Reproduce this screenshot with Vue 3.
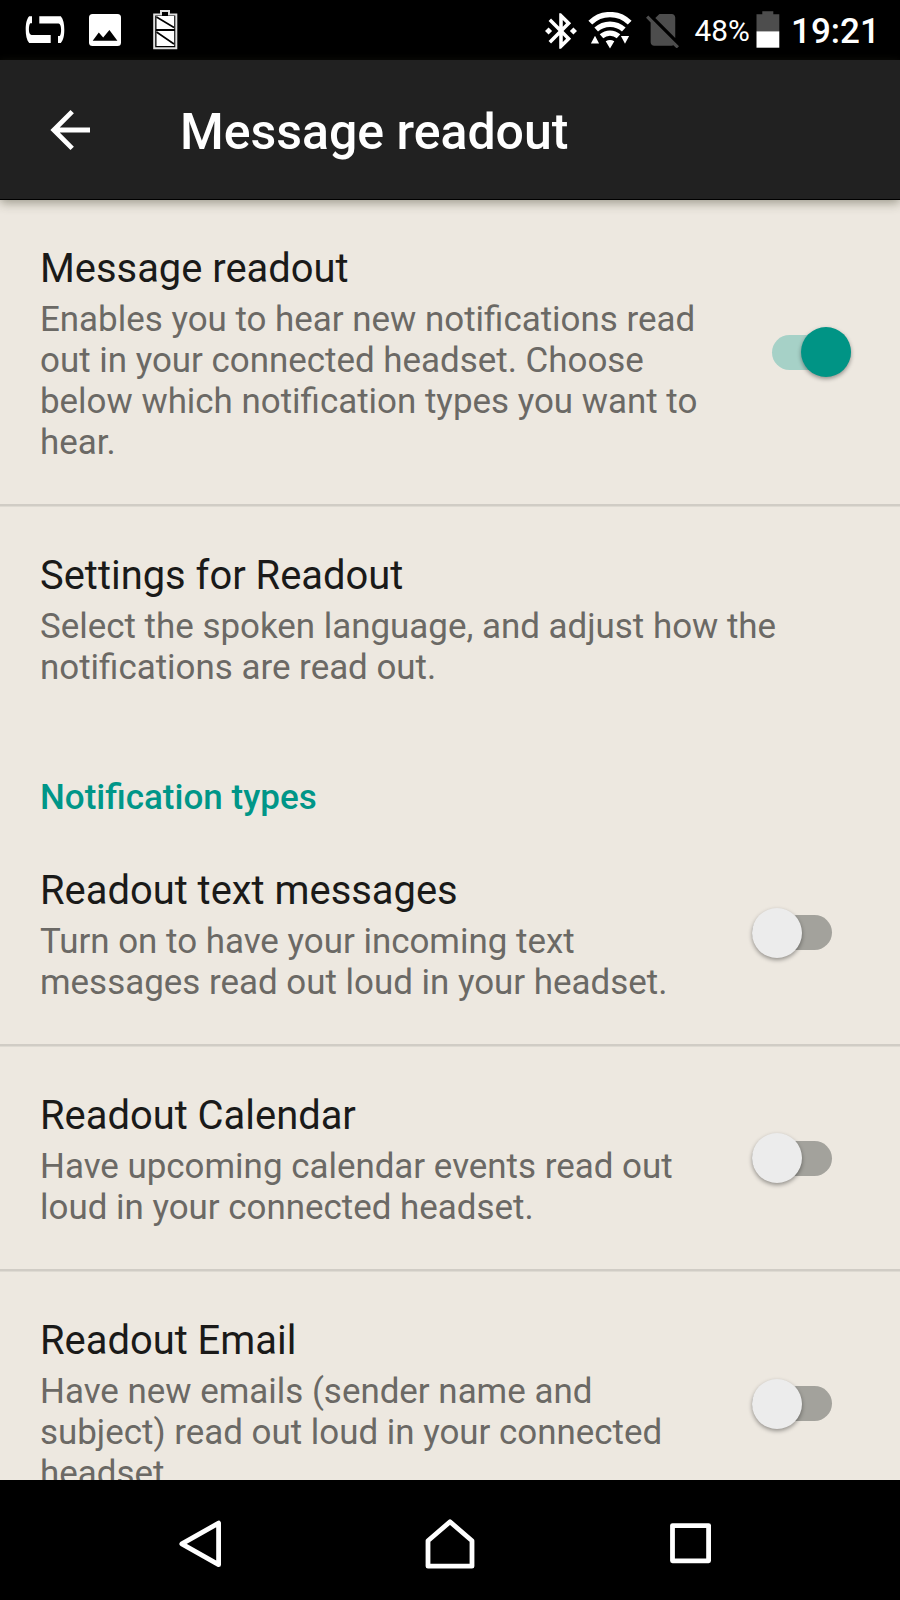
<script setup>
const primary = [
  {
    title: 'Message readout',
    lines: ['Enables you to hear new notifications read', 'out in your connected headset. Choose', 'below which notification types you want to', 'hear.'],
    toggle: 'on',
    divided: true,
  },
  {
    title: 'Settings for Readout',
    lines: ['Select the spoken language, and adjust how the', 'notifications are read out.'],
    toggle: null,
    divided: false,
  },
]

const types = [
  {
    title: 'Readout text messages',
    lines: ['Turn on to have your incoming text', 'messages read out loud in your headset.'],
    toggle: 'off',
    divided: true,
  },
  {
    title: 'Readout Calendar',
    lines: ['Have upcoming calendar events read out', 'loud in your connected headset.'],
    toggle: 'off',
    divided: true,
  },
  {
    title: 'Readout Email',
    lines: ['Have new emails (sender name and', 'subject) read out loud in your connected', 'headset.'],
    toggle: 'off',
    divided: false,
  },
]

const sections = [
  { label: '', items: primary },
  { label: 'Notification types', items: types },
]
</script>

<template>
  <div class="screen">
    <div class="status">
      <svg class="s-loop" width="40" height="28" viewBox="25 16 40 28" fill="#fff">
        <path d="M32 16.3H29.2C26.6 19 25.7 24 25.7 29.5S26.6 40 29.2 43H50.7V35H31.5C29.4 34.5 28.9 32 28.9 29.5S29.4 24 30.2 23.3H32Z" />
        <path transform="rotate(180 45 29.6)" d="M32 16.3H29.2C26.6 19 25.7 24 25.7 29.5S26.6 40 29.2 43H50.7V35.7H31.5C29.4 35.2 28.9 32 28.9 29.5S29.4 24 30.2 23.3H32Z" />
      </svg>
      <svg class="s-image" width="32" height="32" viewBox="0 0 32 32">
        <rect width="32" height="32" rx="3.5" fill="#fff" />
        <path d="M3.7 26.7L9.8 18.5L14.2 23.5L20.4 16L28.4 26.7Z" fill="#000" />
      </svg>
      <svg class="s-cell" width="25" height="40" viewBox="153 11 25 40">
        <path d="M154.2 15.5H161V12H169V15.5H176.3V49.3H154.2Z" fill="#000" stroke="#e0e0e0" stroke-width="2" />
        <path d="M156.5 17H174.2V30H156.5ZM156.5 32H174.2V47H156.5Z" fill="#fff" />
        <path d="M156.5 18L174 28.5M156.5 33L174 45" stroke="#000" stroke-width="1.6" />
      </svg>
      <span class="spacer"></span>
      <svg class="s-bt" width="32" height="36" viewBox="3 2 18 20" fill="#fff">
        <path d="M7 12l-2-2-2 2 2 2 2-2zm10.71-4.29L12 2h-1v7.59L6.41 5 5 6.41 10.59 12 5 17.59 6.41 19 11 14.41V22h1l5.71-5.71-4.3-4.29 4.3-4.29zM13 5.83l1.88 1.88L13 9.59V5.83zm1.88 10.46L13 18.17v-3.76l1.88 1.88zM19 10l-2 2 2 2 2-2-2-2z" />
      </svg>
      <svg class="s-wifi" width="44" height="37" viewBox="588.5 12 44 37">
        <g fill="none" stroke="#fff" stroke-width="5.4">
          <path d="M590.8 22.7A28 28 0 0 1 630.2 22.7" />
          <path d="M596.7 29.6A20.5 20.5 0 0 1 624.3 29.6" />
          <path d="M602 36.3A13 13 0 0 1 619 36.3" />
        </g>
        <path d="M606.2 41.3Q610.5 38.8 614.8 41.3L610.5 48.5ZM591.4 43.5H599.6L595.5 35.8ZM621.4 36H629.6L625.5 43.7Z" fill="#fff" />
      </svg>
      <svg class="s-sim" width="33" height="34.5" viewBox="2.38 3 18.74 19.62" fill="#4d4d4d">
        <path d="M18.99 5c0-1.1-.89-2-1.99-2h-7L7.66 5.34 19 16.68 18.99 5zM3.65 3.88L2.38 5.15 5 7.77V19c0 1.1.9 2 2 2h10.01c.35 0 .67-.1.96-.26l1.88 1.88 1.27-1.27L3.65 3.88z" />
      </svg>
      <span class="percent">48%</span>
      <svg class="s-batt" width="24" height="38" viewBox="0 0 24 38">
        <path d="M.5 3.3H6.3V.3H17.3V3.3H23.3V20.3H.5Z" fill="#4d4d4d" />
        <path d="M.5 20.3H23.3V36.7H.5Z" fill="#fff" />
      </svg>
      <span class="clock">19:21</span>
    </div>

    <header class="bar">
      <svg class="back" width="42" height="42" viewBox="0 0 42 42" fill="none" stroke="#fff" stroke-width="4.8">
        <path d="M40 21H4M22.2 2.6L3.8 21L22.2 39.4" />
      </svg>
      <h1>Message readout</h1>
    </header>

    <main class="list">
      <template v-for="section in sections" :key="section.label">
        <h2 v-if="section.label" class="category">{{ section.label }}</h2>
        <div v-for="item in section.items" :key="item.title" class="item" :class="{ divided: item.divided }">
          <div class="text">
            <div class="title">{{ item.title }}</div>
            <div v-for="line in item.lines" :key="line" class="line">{{ line }}</div>
          </div>
          <span v-if="item.toggle" class="switch" :class="item.toggle"><i class="thumb"></i></span>
        </div>
      </template>
    </main>

    <nav class="nav">
      <svg width="44" height="50" viewBox="178 1519.5 44 50">
        <path d="M218.6 1523.6V1565.2L181.8 1544.4Z" />
      </svg>
      <svg width="52" height="52" viewBox="424 1517 52 52">
        <path d="M428 1539.8L450 1520.8L472 1539.8V1565.2H428Z" />
      </svg>
      <svg width="43" height="43" viewBox="669 1523 43 43">
        <path d="M672.5 1526.6H708.6V1561.8H672.5Z" />
      </svg>
    </nav>
  </div>
</template>

<style>
html,
body {
  margin: 0;
  background: #000;
}
</style>

<style scoped>
.screen {
  width: 900px;
  height: 1600px;
  display: flex;
  flex-direction: column;
  overflow: hidden;
  background: #ede8e0;
  font-family: Roboto, "Noto Sans", sans-serif;
}
.status {
  height: 60px;
  flex: none;
  display: flex;
  align-items: flex-start;
  background: #000;
  color: #fff;
  padding: 0 25px;
  box-sizing: border-box;
}
.status svg {
  flex: none;
  display: block;
}
.s-loop {
  margin-top: 16px;
}
.s-image {
  margin: 14px 0 0 24px;
}
.s-cell {
  margin: 10px 0 0 31.5px;
}
.spacer {
  flex: 1;
}
.s-bt {
  margin: 12.5px 11px 0 0;
}
.s-wifi {
  margin: 12px 14px 0 0;
}
.s-sim {
  margin: 13.5px 15.5px 0 0;
}
.percent {
  width: 61.5px;
  font-size: 29.8px;
  line-height: 62px;
  white-space: nowrap;
}
.s-batt {
  margin: 11px 11px 0 0;
}
.clock {
  width: 84px;
  font-size: 35px;
  font-weight: 500;
  line-height: 64px;
  white-space: nowrap;
}
.bar {
  position: relative;
  z-index: 1;
  height: 140px;
  flex: none;
  box-sizing: border-box;
  display: flex;
  align-items: center;
  padding-left: 49.5px;
  background: #212121;
  border-bottom: 1px solid #000;
  box-shadow: 0 3px 10px rgba(60, 60, 40, 0.45);
}
.back {
  margin-right: 88.5px;
}
h1 {
  margin: 6px 0 0;
  font-size: 50px;
  font-weight: 500;
  color: #fff;
  line-height: 59px;
}
.list {
  flex: 1;
  min-height: 0;
  overflow: hidden;
}
.item {
  display: flex;
  align-items: center;
  justify-content: space-between;
  padding: 45.4px 40px 40.3px;
}
.divided {
  border-bottom: 2px solid #d0ccc5;
  box-shadow: 0 1px 0 #dedad2;
  margin-bottom: 1px;
}
.text {
  white-space: nowrap;
}
.title {
  font-size: 39.9px;
  line-height: 47px;
  color: #1a1a19;
  margin-bottom: 8px;
}
.line {
  font-size: 34.92px;
  line-height: 40.83px;
  color: #6b6965;
}
.category {
  box-sizing: border-box;
  height: 92px;
  margin: 0;
  padding: 48px 0 0 40px;
  font-size: 35px;
  line-height: 41px;
  font-weight: 500;
  color: #009688;
}
.switch {
  width: 80px;
  height: 35px;
  flex: none;
  border-radius: 18px;
  display: flex;
  align-items: center;
  margin: -4.8px 28px 0 0;
  background: #a3a29c;
}
.switch.on {
  width: 79px;
  margin-right: 9px;
  justify-content: flex-end;
  background: #a6d1c7;
}
.thumb {
  width: 50px;
  height: 50px;
  flex: none;
  border-radius: 50%;
  background: #ececec;
  box-shadow: 0 2px 4px rgba(0, 0, 0, 0.38);
}
.on .thumb {
  background: #009485;
}
.nav {
  height: 120px;
  flex: none;
  box-sizing: border-box;
  display: grid;
  grid-template-columns: 246px 245px 43px;
  align-items: center;
  padding: 7px 0 0 178px;
  background: #000;
}
.nav svg {
  fill: none;
  stroke: #fff;
  stroke-width: 4.8;
  stroke-linejoin: round;
}
</style>
